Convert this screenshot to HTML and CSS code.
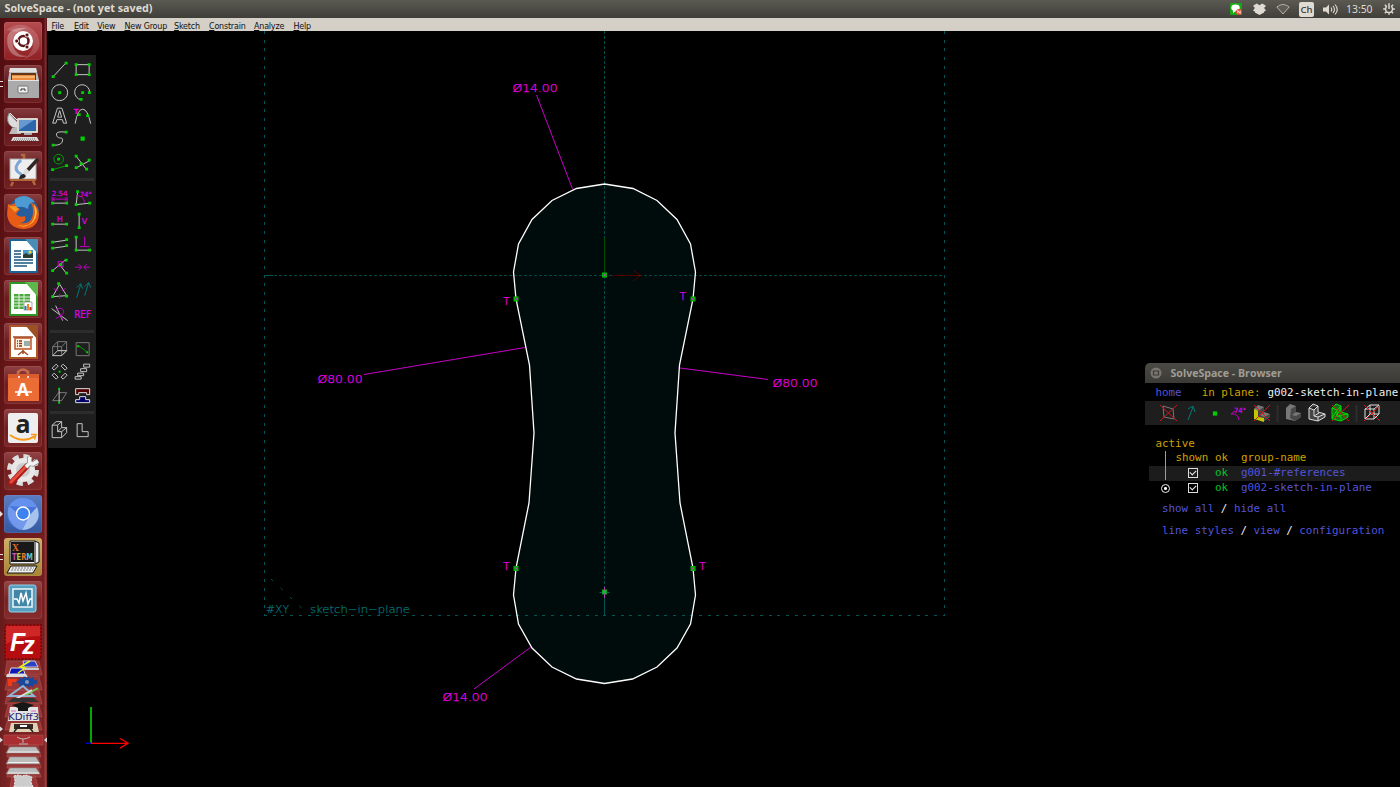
FILE: index.html
```html
<!DOCTYPE html>
<html lang="en">
<head>
<meta charset="utf-8">
<title>SolveSpace - (not yet saved)</title>
<link rel="stylesheet" href="styles.css">
</head>
<body>
<header class="topbar">
  <div class="title">SolveSpace - (not yet saved)</div>
  <div class="tray">
    <svg width="12" height="12" viewBox="0 0 12 12"><rect width="12" height="12" rx="1" fill="#16a816"/><ellipse cx="5.5" cy="4.8" rx="4.2" ry="3.2" fill="#fff"/><path d="M3 7v3l3-2z" fill="#fff"/><circle cx="9" cy="9" r="3" fill="#e8432e"/><path d="M7.8 10.5v-3l2.4 3v-3" stroke="#fff" stroke-width=".8" fill="none"/></svg>
    <svg width="13" height="12" viewBox="0 0 14 13"><path d="M4 .5 7 2.500l3-2L14 3l-2 2.500L14 8l-2 1.200v1L7 13l-5-2.800v-1L0 8l2-2.500L0 3z" fill="#dfdbd2"/></svg>
    <svg width="14" height="12" viewBox="0 0 14 12"><path d="M.8 4Q7-1 13.200 4L7 11z" fill="#5d5c55" stroke="#b5b1a8" stroke-width="1"/></svg>
    <span class="lang">Ch</span>
    <svg width="15" height="13" viewBox="0 0 15 13"><path d="M0 4.500h3L6 1.500v10l-3-3H0z" fill="#dfdbd2"/><path d="M8 4.500q1.500 2 0 4M10 3q3 3.500 0 7M12 1.500q4.500 5 0 10" fill="none" stroke="#dfdbd2" stroke-width="1.100"/></svg>
    <span class="clock">13:50</span>
    <svg width="12" height="12" viewBox="-6.500 -6.500 13 13"><path d="M-2.200-3A3.800 3.800 0 1 0 2.200-3M0-6.200V0M-6.300 0h2.500M6.300 0H3.800M0 6.300V3.800M-4.500 4.500l1.800-1.800M4.500 4.500 2.700 2.700M-4.500-4.500l1.800 1.800M4.500-4.500 2.700-2.700" fill="none" stroke="#dfdbd2" stroke-width="1.600"/></svg>
  </div>
</header>
<div class="desktop">
<nav class="launcher">
  <svg class="tile ubuntu" viewBox="0 0 38 38"><path d="M2 8Q20-4 33 12Q42 30 20 37Q34 26 27 13" fill="#fff" opacity=".16"/><path d="M4 25Q-1 4 23 6Q6 10 9 24Q12 34 24 34Q8 38 4 25" fill="#fff" opacity=".3"/><circle cx="19" cy="19" r="10" fill="#fff"/><circle cx="19.500" cy="19" r="5" fill="none" stroke="#5d1518" stroke-width="2.500"/><g fill="#5d1518" stroke="#fff" stroke-width=".8"><circle cx="12.700" cy="19" r="2"/><circle cx="23" cy="13" r="2"/><circle cx="23" cy="25" r="2"/></g></svg>
  <div class="tile run2"><svg viewBox="0 0 38 38"><path d="M6 3h26l3 12v18H4V15z" fill="#bbb"/><path d="M6 3h26l1 4H5z" fill="#e0e0e0"/><path d="M7 8h25v8H7z" fill="#643516"/><path d="M8 10h23v5H8z" fill="#ee8b3c"/><path d="M8 12h23" stroke="#ffe0ad" /><path d="M4 15h31v18H4z" fill="#aaa"/><path d="M4 15.500h31" stroke="#e5e5e5"/><rect x="14" y="21" width="10" height="7" rx="1" fill="#eee" stroke="#777"/><path d="M17 26v-2h4v2" fill="none" stroke="#333"/></svg></div>
  <svg class="tile" viewBox="0 0 38 38"><path d="M5 5Q1 14 8 19Q14 22 17 18z" fill="#ddd" stroke="#888"/><path d="M8 20h7l2 6H5z" fill="#bbb"/><path d="M6 5 13 12" stroke="#eee"/><rect x="13" y="10" width="21" height="15" rx="1" fill="#d8d8d0"/><path d="M15 12h17v11H15z" fill="#2e66ac"/><path d="M15 12h15L15 22z" fill="#6898d2"/><path d="M20 25h8v2h-8z" fill="#aaa"/><path d="M9 29h24l2 4H7z" fill="#d8d8d8"/><path d="M10 31h22M9 32.500h24" stroke="#777" stroke-dasharray="1 1"/></svg>
  <svg class="tile" viewBox="0 0 38 38"><path d="M17 4h3v5M9 31l-2 4M29 30l2 4" stroke="#b5693a" stroke-width="2.500" fill="none"/><rect x="6" y="8" width="26" height="20" fill="#eee" stroke="#aaa"/><path d="M17 9Q9 16 14 21Q20 24 16 28" fill="none" stroke="#7da6d8" stroke-width="3"/><path d="M34 8 22 21" stroke="#302722" stroke-width="3.500"/><path d="M24 19l-4 4" stroke="#ddd" stroke-width="4"/><path d="M15 28q1-5 5-5l2 2q-1 3-7 3" fill="#222"/><path d="M6 29h26" stroke="#b5693a" stroke-width="2"/></svg>
  <svg class="tile" viewBox="0 0 38 38"><circle cx="19.500" cy="18.500" r="15.500" fill="#285d9d"/><path d="M11 5Q22-2 31 8Q24 8 24 15Q18 11 11 14z" fill="#4c9bd2"/><path d="M4 10Q7 12 11 9Q11 13 16 15L12 20Q15 24 21 22Q23 28 16 29Q29 31 29 17Q29 10 25 8Q34 10 35 20Q34 35 19 35Q4 34 3 20z" fill="#e65b16"/><path d="M30 10Q36 19 29 28Q22 35 13 31Q30 35 31 18z" fill="#ffc83c"/><path d="M4 11Q7 13 11 12L15 15l-4 3z" fill="#f59a25"/></svg>
  <svg class="tile" viewBox="0 0 38 38"><path d="M5 2h21l8 9v25H5z" fill="#1b6394"/><path d="M7 4h17l8 10v20H7z" fill="#fff"/><path d="M21 2h13v15z" fill="#4a8eb8"/><path d="M10 14h7M10 17h7M10 20h7M10 23h19M10 26h19M10 29h13" stroke="#185785" stroke-width="1.500"/><path d="M19 13h10v8H19z" fill="#419bce"/><path d="M19 21v-3l3-2 3 2 4-2v5" fill="#2c3c31"/><circle cx="26" cy="15" r="1.500" fill="#ffd52f"/></svg>
  <svg class="tile" viewBox="0 0 38 38"><path d="M5 2h21l8 9v25H5z" fill="#2a9823"/><path d="M7 4h17l8 10v20H7z" fill="#fff"/><path d="M21 2h13v15z" fill="#5cb84c"/><path d="M10 14h16v15H10z" fill="#49a93c"/><path d="M10 17h16M10 20h16M10 23h16M10 26h16M15 14v15M20 14v15" stroke="#e8f5e5"/><path d="M20 22h8v8h-8z" fill="#fff" stroke="#888" stroke-width=".7"/><path d="M21.500 26v4" stroke="#2b79ae" stroke-width="2"/><path d="M24 24v6" stroke="#e98826" stroke-width="2"/><path d="M26.500 27v3" stroke="#c03325" stroke-width="2"/></svg>
  <svg class="tile" viewBox="0 0 38 38"><path d="M5 2h21l8 9v25H5z" fill="#ad5526"/><path d="M7 4h17l8 10v20H7z" fill="#fff"/><path d="M21 2h13v15z" fill="#9b5121"/><rect x="11" y="15" width="16" height="11" fill="#fff1df" stroke="#bd5528" stroke-width="1.500"/><path d="M9 14h20M19 27v4M14 32l5-4 5 4" fill="none" stroke="#a24a23" stroke-width="1.500"/><path d="M13 18h5M13 20.500h5M13 23h5" stroke="#8a3518" stroke-width="1.300" stroke-dasharray="1 1 3 1"/><path d="M20 18h6v5h-6z" fill="#99aeb0"/></svg>
  <svg class="tile" viewBox="0 0 38 38"><path d="M14 13V6q5-5 10 0v7" fill="none" stroke="#c86b49" stroke-width="2.500"/><path d="M4 8h31v27H4z" fill="#eb6d35"/><path d="M4 8h31v4H4z" fill="#d95c2c"/><circle cx="15" cy="11" r="1" fill="#fff"/><circle cx="24" cy="11" r="1" fill="#fff"/><text x="19" y="30" text-anchor="middle" fill="#fff" class="bag">A</text><path d="M11 26h17" stroke="#fff" stroke-width="1.500"/></svg>
  <svg class="tile" viewBox="0 0 38 38"><rect x="4" y="4" width="30" height="30" rx="2" fill="#eee"/><text x="19" y="24" text-anchor="middle" class="ama">a</text><path d="M6 26q13 9 25 1" fill="none" stroke="#f6991d" stroke-width="2"/><path d="M27 25.500h5l-1.500 5" fill="none" stroke="#f6991d" stroke-width="1.500"/></svg>
  <svg class="tile" viewBox="0 0 38 38"><circle cx="19" cy="18" r="13.500" fill="none" stroke="#ddd" stroke-width="5" stroke-dasharray="6 4.600"/><circle cx="19" cy="18" r="9.500" fill="#ccc" stroke="#e8e8e8" stroke-width="5"/><path d="M7 31 23 14" stroke="#a91a18" stroke-width="5.500" stroke-linecap="round"/><path d="M7 30 22 14.500" stroke="#e44b3d" stroke-width="3" stroke-linecap="round"/><path d="M22 15l5-5M26 5q-2 7 3 7l5-3" fill="none" stroke="#888" stroke-width="5"/><path d="M22 15l5-5M26 5q-2 7 3 7l5-3" fill="none" stroke="#f2f2f2" stroke-width="3.500"/></svg>
  <div class="tile run1 blue"><svg viewBox="0 0 38 38"><circle cx="19" cy="19" r="16" fill="#4776d8"/><path d="M5 11Q11 2 19 3Q29 3 33 12H19z" fill="#6591ee"/><path d="M33 12q5 12-5 20-4 3-10 3l7-14z" fill="#a8c2ee"/><path d="M5 11q-4 11 5 20 3 3 8 4l5-9z" fill="#7299ec"/><circle cx="19" cy="18.500" r="7.200" fill="#fff"/><circle cx="19" cy="18.500" r="5.800" fill="#3e82ef"/></svg></div>
  <div class="tile run2 gold"><svg viewBox="0 0 38 38"><path d="M6 3h25l4 2v19l-4 2H6z" fill="#eee" stroke="#111"/><path d="M7 4h23v20H7z" fill="#181818"/><path d="M31 3v22" stroke="#111"/><text x="8" y="13" class="xbig" textLength="7" lengthAdjust="spacingAndGlyphs">X</text><text x="8" y="22" class="xterm" textLength="21" lengthAdjust="spacingAndGlyphs"><tspan fill="#c54cc5">T</tspan><tspan fill="#aacb43">E</tspan><tspan fill="#e37a2b">R</tspan><tspan fill="#54c6d2">M</tspan></text><path d="M7 28h26l-4 7H3z" fill="#eee" stroke="#111"/><path d="M8 30h22M7 32h22" stroke="#777" stroke-dasharray="2 1"/></svg></div>
  <svg class="tile" viewBox="0 0 38 38"><rect x="5" y="4" width="27" height="27" rx="2" fill="#579fbf" stroke="#92d3e7"/><path d="M9 8h19v18H9z" fill="#4185a7" stroke="#eef8fc" stroke-width="1.500"/><path d="M10 18h3l2 4 2-10 2 8 3-8 2 11 2-5h2" fill="none" stroke="#fff" stroke-width="1.500"/></svg>
  <svg class="fz" viewBox="0 0 38 36"><rect x="1" y="1" width="36" height="34" fill="#b60d10" stroke="#7a090b" stroke-width="2" stroke-dasharray="2 1.500"/><path d="M2 2h34v10q-20 0-34 8z" fill="#dd3833" opacity=".6"/><text x="6" y="27" class="fzt">F<tspan dx="-3" dy="3">z</tspan></text></svg>
  <svg class="fold" width="47" height="127" viewBox="0 660 47 127">
    <g fill="#a33c3c" stroke="#bd6464" stroke-width=".6" opacity=".75"><path d="M7 661h32l3 14H5zM8 676h31l3 14H5zM8 690h31l3 14H5zM8 705h31l3 12H5zM8 718h31l3 12H5z"/><path d="M4 735h39v10H4z" fill="#b93236"/><path d="M9 745h29l3 12H7zM9 756h29l3 12H7zM9 767h29l3 10H7zM12 776h23l3 11H10z"/></g>
    <path d="M23 661h12l3 6H24z" fill="#2a40c9" stroke="#ccc"/><path d="M25 668h14v2H24z" fill="#ccc"/><path d="M11 668h12l2 6H9z" fill="#1018bb" stroke="#ddd"/><path d="M7 674h19l2 3H6z" fill="#ddd"/><path d="m30 661-10 6 5 1-7 5" fill="none" stroke="#edf520" stroke-width="1.500"/>
    <path d="M8 679h9v3h-5v4H8z" fill="#f03a17"/><ellipse cx="27" cy="682" rx="9" ry="4" fill="#19489c" stroke="#19489c" stroke-dasharray="2 2" stroke-width="3"/><circle cx="27" cy="682" r="2" fill="#8095bd"/>
    <path d="M9 696 23 686l11 10z" fill="none" stroke="#90b5d8" stroke-width="2"/><path d="m38 688-12 7" stroke="#68c84a" stroke-width="2"/><path d="m14 700 18-10" stroke="#ddd" stroke-width="2"/><path d="M13 698h21l5 4H8z" fill="#333"/>
    <path d="M10 707h28l1 14H8z" fill="#e4e4e4"/><path d="m12 705 11-3 11 3-6 3v3H18v-3z" fill="#171717"/><path d="M11 711h5m15 0h5" stroke="#d66bc1"/><text x="8" y="720" class="kd" textLength="31" lengthAdjust="spacingAndGlyphs">KDiff3</text>
    <path d="M11 723h26l2 9H9z" fill="#ddd2b5"/><path d="M14 724h19v5H14z" fill="#3b2722"/><path d="m14 732 4-5h11l4 5" fill="none" stroke="#222" stroke-width="1.500"/><path d="M20 726h7" stroke="#fff" stroke-width="2"/>
    <path d="M17 737q6 4 13 0M23 739v4m-4 1h9" fill="none" stroke="#bbb"/>
    <g fill="#bbb" stroke="#888" stroke-width=".5"><path d="M10 747h26l4 6H6zM10 757h26l4 7H6zM10 768h26l4 6H6z"/></g><path d="M8 752h31M8 762.500h31M8 773h31" stroke="#eee"/><path d="m14 776 4-1 4 1 4-1 6 2-1 5 2 5H14l1-6z" fill="#ccc" stroke="#eee" stroke-dasharray="2 1"/>
    <path d="m0 726.500 3 2.500-3 2.500zm0 11 3 2.500-3 2.500zM47 737.500l-3 2.500 3 2.500z" fill="#ddd"/>
  </svg>
</nav>
<main class="work">
  <div class="menu"><span><u>F</u>ile</span><span><u>E</u>dit</span><span><u>V</u>iew</span><span><u>N</u>ew Group</span><span><u>S</u>ketch</span><span><u>C</u>onstrain</span><span><u>A</u>nalyze</span><span><u>H</u>elp</span></div>
  <div class="canvas">
    <svg class="drawing" width="1353" height="756" viewBox="47 31 1353 756">
      <path fill="#000b0b" d="M604.500 184 633 188.500 657 200.500 677 219.500 690.500 244 695.500 272 693 299 679.500 365 675 433 680 503 693 568 695.500 595 690.500 624 677 648 657 667 632.500 679 604.500 683.500 576.500 679 552 667 532 648 518.500 624 513.500 595 516 568 529 503 534 433 529.500 365 516 299 513.500 272 518.500 244 532 219.500 552 200.500 576.500 188.500z"/>
      <g stroke="#005656" fill="none" shape-rendering="crispEdges">
        <path d="M264.500 31V615M944.500 31V615" stroke-dasharray="3 5.700"/><path d="M264 615.500H945" stroke-dasharray="3 5.700"/>
        <path d="M264 275.500H945" stroke="#004848" stroke-dasharray="3 2"/><path d="M604.500 31V615" stroke="#004c4c" stroke-dasharray="3 2"/><path d="M264 275.500h9M604.500 592v23"/>
      </g>
      <path d="M271 579 309 615" stroke="#005050" stroke-dasharray="3 10"/>
      <path fill="none" stroke="#fff" stroke-width="1.300" d="M604.500 184 633 188.500 657 200.500 677 219.500 690.500 244 695.500 272 693 299 679.500 365 675 433 680 503 693 568 695.500 595 690.500 624 677 648 657 667 632.500 679 604.500 683.500 576.500 679 552 667 532 648 518.500 624 513.500 595 516 568 529 503 534 433 529.500 365 516 299 513.500 272 518.500 244 532 219.500 552 200.500 576.500 188.500z"/>
      <path d="M604.500 238v34" stroke="#004c00"/><path d="M612 275.500h27M633 270l8 5.500-8 5.500" stroke="#540000" fill="none"/>
      <path d="M536.500 95 572.500 189M364 374.500 525 347.500M680 368 768 379.500M474 689 531 647" stroke="#c800c8"/>
      <g class="cad dim"><text x="512.500" y="92" textLength="45" lengthAdjust="spacingAndGlyphs">Ø14.00</text><text x="317.500" y="383" textLength="45" lengthAdjust="spacingAndGlyphs">Ø80.00</text><text x="772.500" y="386.500" textLength="45" lengthAdjust="spacingAndGlyphs">Ø80.00</text><text x="442.500" y="700.500" textLength="45" lengthAdjust="spacingAndGlyphs">Ø14.00</text><text x="503" y="305">T</text><text x="679.500" y="300">T</text><text x="503" y="570">T</text><text x="699" y="570">T</text></g>
      <g class="cad plane"><text x="266" y="613" textLength="23" lengthAdjust="spacingAndGlyphs">#XY</text><text x="310" y="613" textLength="100" lengthAdjust="spacingAndGlyphs">sketch−in−plane</text></g>
      <g class="nodes"><path d="M604.500 275h.01M516 299h.01M693 299h.01M516 568.500h.01M693 568.500h.01M604.500 592h.01"/><path class="core" d="M604.500 275h.01M516 299h.01M693 299h.01M516 568.500h.01M693 568.500h.01"/></g>
      <path d="M604.500 587v11" stroke="#b040b0"/><path d="M599.500 592.500h10" stroke="#106050"/><path d="M602.500 592h4" stroke="#20b040" stroke-width="3"/>
      <path d="M91 707v36" stroke="#00e000" stroke-width="1.500"/><path d="M86 743.300h5" stroke="#0000d0" stroke-width="1.500"/><path d="M91 743.300h36M120 738.500l8 4.800-8 4.800" fill="none" stroke="#f00" stroke-width="1.300"/>
    </svg>
    <aside class="tools">
      <div class="grp">
        <svg viewBox="-11.650 -11.650 23.300 23.300"><path class="g" d="M-6 6.500 6-6.500"/><path class="n" d="M-6.500 7h0M6.500-6.500h0"/></svg>
        <svg viewBox="-11.650 -11.650 23.300 23.300"><path class="g" d="M-6.500-5h13V5h-13z"/><path class="n" d="M-6.500-5h0M6.500-5h0M6.500 5h0M-6.500 5h0"/></svg>
        <svg viewBox="-11.650 -11.650 23.300 23.300"><circle class="g" r="8"/><path class="n" d="M0 0h0"/></svg>
        <svg viewBox="-11.650 -11.650 23.300 23.300"><path class="g" d="M7 0A7.500 7.500 0 1 0-1.500 7"/><path class="n" d="M0 0h0M6.700 0h0M-1.500 6.700h0"/></svg>
        <svg viewBox="-11.650 -11.650 23.300 23.300"><path class="g" d="M-7 7.500-2.200-7.500h4.400L7 7.500H3.800L2.800 4h-5.600l-1 3.500zM-2 1.500h4L0-5z"/></svg>
        <svg viewBox="-11.650 -11.650 23.300 23.300"><path class="g" d="M-7.500 8Q-5-6.500 0-6.500T8 8"/><path class="n" d="M-3.500-1h0M5 0h0"/><text class="mt strong" x="-9" y="-2" font-size="7">T</text></svg>
        <svg viewBox="-11.650 -11.650 23.300 23.300"><path class="g" d="M6.500-6.500Q-5-8-3-3C-1 1 3-2 3 1Q3 7-6 6.500"/><path class="n" d="M6.500-6.500h0M-6.500 6.500h0"/></svg>
        <svg viewBox="-11.650 -11.650 23.300 23.300"><path class="n big" d="M0 0h0"/></svg>
        <svg viewBox="-11.650 -11.650 23.300 23.300"><circle cx="-1" cy="-3.500" r="4.800" class="ng"/><path class="ng" d="M-7 7 7 3"/><path class="n" d="M-1-3.500h0M-7 7h0M7 3h0"/></svg>
        <svg viewBox="-11.650 -11.650 23.300 23.300"><path class="g" d="M-7-7 4 7M-6 5 7-2"/><path class="n" d="M-6.500-6.500h0M4 6.500h0M-6.500 5h0M6.500-2.500h0M-1.500 1h0"/></svg>
      </div><div class="sep"></div>
      <div class="grp">
        <svg viewBox="-11.650 -11.650 23.300 23.300"><text class="mt" x="-8" y="-2" font-size="7" textLength="16" lengthAdjust="spacingAndGlyphs">2.54</text><path class="m" d="M-7.500-1v6M7.500-1v6M-7 1.500H7M-5 0l-2 1.500 2 1.500M5 0l2 1.500L5 3"/><path class="g" d="M-6 5.500H6"/><path class="n" d="M-7 5.500h0M7 5.500h0"/></svg>
        <svg viewBox="-11.650 -11.650 23.300 23.300"><path class="g" d="M-5-6-6.500 7 7 5.500"/><path class="m" d="M-6-2Q1-2 2 5"/><text class="mt" x="-3" y="-1" font-size="7" textLength="12" lengthAdjust="spacingAndGlyphs">74°</text><path class="n" d="M-5-6h0M-6.500 7h0M7 5.500h0"/></svg>
        <svg viewBox="-11.650 -11.650 23.300 23.300"><text class="mt" x="-3" y="1" font-size="8">H</text><path class="g" d="M-6.500 3.500h13"/><path class="n" d="M-7 3.500h0M7 3.500h0"/></svg>
        <svg viewBox="-11.650 -11.650 23.300 23.300"><text class="mt" x="-1" y="3.500" font-size="8">V</text><path class="g" d="M-3.500-6V7"/><path class="n" d="M-3.500-6.500h0M-3.500 7h0"/></svg>
        <svg viewBox="-11.650 -11.650 23.300 23.300"><path class="g" d="M-6.500-1.500 7-3.500M-6.500 4.500 7 2.500"/><path class="n" d="M-7-1.500h0M7-4h0M-7 4.500h0M7 2h0"/></svg>
        <svg viewBox="-11.650 -11.650 23.300 23.300"><path class="g" d="M-6.500-6.500v13H7"/><path class="m" d="M2-7v10M-3 3H7"/><path class="n" d="M-6.500-6.500h0M-6.500 6.500h0M7 6.500h0"/></svg>
        <svg viewBox="-11.650 -11.650 23.300 23.300"><path class="g" d="M-7 4 6-7M0-2l7 9"/><rect class="m" x="-1.500" y="-5" width="5" height="5"/><path class="n" d="M-7 4h0M6.500-6.500h0M1-2h0M7 6.500h0"/></svg>
        <svg viewBox="-11.650 -11.650 23.300 23.300"><path class="m" d="M-7.500 .5h6M-4-2.500l3 3-3 3M7.500 .5h-6M4-2.500l-3 3 3 3"/></svg>
        <svg viewBox="-11.650 -11.650 23.300 23.300"><path class="g" d="M0-6.500-7 6 7 5z"/><path class="m" d="M-6-2l4 2M2 0l4-2M0 3v5"/><path class="n" d="M-1-7h0M-7 6h0M7 5.500h0"/></svg>
        <svg viewBox="-11.650 -11.650 23.300 23.300"><path class="t" d="M-6 7-2-6M2 5 6-8M-6-3l4-4 2 5M2-4l4-4 2 5"/></svg>
        <svg viewBox="-11.650 -11.650 23.300 23.300"><path class="g" d="M-8-5 8 7M-4-8 3 7"/><path class="m" d="M-4-3Q1-8 4-3 5 1-4 5M0 0l3 6"/></svg>
        <svg viewBox="-11.650 -11.650 23.300 23.300"><text class="mt" x="-8.500" y="4.200" font-size="10" textLength="17" lengthAdjust="spacingAndGlyphs">REF</text></svg>
      </div><div class="sep"></div>
      <div class="grp">
        <svg viewBox="-11.650 -11.650 23.300 23.300"><path class="d" d="M-7-2-2-7H7V2L2 7M-7-2H2L7-7M-7-2V7M2-2V7M-2-7V2H7"/><path class="g" d="M-7 7-2 2H7L2 7z"/></svg>
        <svg viewBox="-11.650 -11.650 23.300 23.300"><path class="d" d="M-6.500-6h13V7h-13z"/><path class="ng" d="M-4-3 4 3"/><path class="n tiny" d="M-4.500-2.500h0M4.500 3.500h0"/></svg>
        <svg viewBox="-11.650 -11.650 23.300 23.300"><path class="g" d="M-7.500-3.500-3.500-7.500l2 2-4 4zM7.500-3.500 3.500-7.500l-2 2 4 4zM-7.500 3.500l4 4 2-2-4-4zM7.500 3.500l-4 4-2-2 4-4z"/><path class="n tiny" d="M0 0h0"/></svg>
        <svg viewBox="-11.650 -11.650 23.300 23.300"><path class="g" d="M1-7.500h6v3H1zM-2-3h6v3h-6zM-5 1.500h6v2.500h-6zM-7.500 5h6v2.500h-6z"/></svg>
        <svg viewBox="-11.650 -11.650 23.300 23.300"><path class="d" d="M-7 5-1-3H7L2 5z"/><path class="g" d="M-.5-7V7"/><path class="n tiny" d="M-.5-7h0M-.5 7h0"/></svg>
        <svg viewBox="-11.650 -11.650 23.300 23.300"><path d="M-7-7H7v6H4v-2h-8v2h-3z" fill="#500" stroke="#ddd"/><path d="M-3 1h6v3h4v3H-7V4h4z" fill="#006" stroke="#ddd"/></svg>
      </div><div class="sep"></div>
      <div class="grp">
        <svg viewBox="-11.650 -11.650 23.300 23.300"><path class="g" d="M-7.500-4.500-3.500-8h5.500v6L7-2v5L2 8h-9.500zM-7.500-4.500H-2L2-8M-2-4.500V2l4-4M-2 2h4l5-4M2 2v6"/></svg>
        <svg viewBox="-11.650 -11.650 23.300 23.300"><path class="g" d="M-5.500-6h5v8h6v5h-11z"/></svg>
      </div>
    </aside>
    <section class="browser">
      <div class="bt"><svg width="12" height="12" viewBox="0 0 12 12"><circle cx="6" cy="6" r="5.500" fill="#77756e"/><path d="M3.500 4h5v4h-5z" fill="none" stroke="#3c3b37" stroke-width="1.200"/></svg><span>SolveSpace - Browser</span></div>
      <div class="path"><a>home</a><b>in plane:</b><i>g002-sketch-in-plane</i></div>
      <svg class="icons" width="255" height="24" viewBox="1145 401 255 24">
        <path d="M1277.500 405v17M1356.500 405v17" stroke="#2c2c2c" stroke-width="2"/>
        <path d="M1163 406l10 3 1 10-10-2z" fill="none" stroke="#777"/><path d="M1188 420l5-13M1188 409l5-3 2 6" class="t"/><path class="n big" d="M1215 413.500h0"/>
        <path class="m" d="M1231 414q7-1 8 6M1231 414l4-3"/><text class="mt" x="1234" y="413" font-size="7" textLength="12" lengthAdjust="spacingAndGlyphs">74°</text>
        <path d="M1254 409l4-4 6 2v5l6 2v3l-6 4-10-2z" fill="#777"/><path d="M1258 411l6-4v6l-4 2 4 2 6-3v3l-7 4-8-2z" fill="#444"/><path d="M1254 409l4 2v6l6 1v4l-10-3z" fill="#c4c400"/>
        <path d="M1286 408l4-4 6 2v6l5 1v4l-6 4-9-2z" fill="#777"/><path d="M1291 409l5-3v6l-4 3 4 1 5-3v4l-6 4-5-3z" fill="#484848"/>
        <path d="M1309 408l4-4 5 2v6l7 2v3l-7 4-9-2zM1309 408l5 2 4-4M1314 410v6l4 1v4M1314 416l5-3M1318 417l7-3" fill="#444" stroke="#ddd"/>
        <path d="M1332 408l4-4 5 2v6l7 2v3l-7 4-9-2z" fill="#176c17" stroke="#0d0"/><path d="M1332 408l5 2 4-4M1337 410v6l4 1v4M1332 418l5-8M1334 420l7-12M1337 416l11-2" fill="none" stroke="#0d0"/>
        <path d="M1365 409h9v10h-9zM1365 409l5-4h9v9l-5 5M1374 409l5-4M1370 405v9h9M1365 419l5-5" fill="none" stroke="#ddd"/>
        <path d="M1160 405l17 16M1177 405l-17 16M1254 405l16 16M1270 405l-16 16M1332 405l17 16M1349 405l-17 16M1364 405l16 16M1380 405l-16 16" stroke="#d01818"/>
      </svg>
      <div class="groups">
        <div class="act">active</div>
        <div class="row gold-t"><span></span><span>shown</span><span>ok</span><span>group-name</span></div>
        <div class="row alt"><span class="bar"></span><span class="check"></span><em>ok</em><a>g001-#references</a></div>
        <div class="row"><span class="radio"></span><span class="check"></span><em>ok</em><a>g002-sketch-in-plane</a></div>
        <div class="links"><a>show all</a> / <a>hide all</a></div>
        <div class="links"><a>line styles</a> / <a>view</a> / <a>configuration</a></div>
      </div>
    </section>
  </div>
</main>
</div>
</body>
</html>
```

FILE: styles.css
```css
* { box-sizing: border-box; }
body { margin: 0; width: 1400px; height: 787px; overflow: hidden; background: #000; display: flex; flex-direction: column; font-family: "Noto Sans", sans-serif; -webkit-font-smoothing: antialiased; }
svg { display: block; }
.topbar { height: 18px; flex: none; background: linear-gradient(#5b5a52, #3f3e39); display: flex; justify-content: space-between; align-items: center; padding: 0 5px 0 4.500px; color: #dfdbd2; }
.title { font: 700 10.750px/16px "Open Sans", sans-serif; white-space: nowrap; margin-top: -2px; }
.tray { display: grid; grid-template-columns: 23px 23px 23px 24px 23px 36.500px 13px; width: 165px; align-items: center; }
.lang { background: #dfdbd2; color: #45443f; width: 15px; height: 15px; border-radius: 2px; font: 600 9.500px/15px "Open Sans", sans-serif; text-align: center; }
.clock { font-size: 10.400px; line-height: 16px; margin-top: -1px; }
.desktop { flex: 1; display: flex; min-height: 0; }
.launcher { width: 47px; flex: none; padding: 4px 0 0 4px; display: flex; flex-direction: column; gap: 5px; background: linear-gradient(90deg, rgba(0,0,0,.12), transparent 20% 93%, rgba(255,255,255,.14) 97%, transparent), linear-gradient(#590e12, #6c1719 50%, #7f2424); }
.tile { width: 38px; height: 38px; flex: none; position: relative; border-radius: 3px; background: linear-gradient(rgba(255,200,200,.24), rgba(255,160,160,.05) 50%, rgba(255,170,170,.1)); box-shadow: inset 0 0 0 1px rgba(255,190,190,.1); }
.ubuntu { background: linear-gradient(#b54c50, #8f2023); }
.blue { background: linear-gradient(#5a7cc1, #36589f); }
.gold { background: linear-gradient(#cfae67, #a78435); }
.run1::before, .run2::before { content: ""; position: absolute; left: -4px; top: 16px; border: 3px solid transparent; border-left-color: #e6dcdc; border-right: 0; }
.run2::before { border: 0; width: 3px; height: 4px; border-top: 1px solid #e6dcdc; border-bottom: 1px solid #e6dcdc; }
.fz { width: 38px; height: 36px; flex: none; }
.fold { margin: -5px 0 0 -4px; flex: none; }
.bag { font: 700 17px "Noto Sans", sans-serif; }
.ama { font: 700 25px "Open Sans", sans-serif; fill: #222; }
.xbig { font: 700 10px "Liberation Serif", serif; fill: #e3692b; }
.xterm { font: 700 8px "DejaVu Sans", sans-serif; }
.fzt { font: italic 700 25px "Liberation Sans", sans-serif; fill: #fff; }
.kd { font: 8px "DejaVu Sans", sans-serif; fill: #27276e; }
.work { flex: 1; display: flex; flex-direction: column; min-width: 0; }
.menu { height: 13px; flex: none; background: #d4d0c8; color: #111; display: grid; grid-template-columns: 22.500px 23.200px 27.300px 49.500px 35px 45px 39.500px auto; padding: 1.500px 0 0 4.500px; font: 8px/13px "DejaVu Sans", sans-serif; letter-spacing: -.2px; white-space: nowrap; }
.menu u { text-underline-offset: 1px; text-decoration-thickness: 1px; }
.canvas { flex: 1; position: relative; background: #000; }
.cad { font: 200 11px "DejaVu Sans", sans-serif; stroke-width: .25px; }
.dim { fill: #f000f0; stroke: #f000f0; }
.plane { fill: #007272; stroke: #007272; }
.nodes path { fill: none; stroke: #00b400; stroke-width: 5; stroke-linecap: square; }
.nodes .core { stroke: #a040a0; stroke-width: 2; }
.tools { position: absolute; left: 1px; top: 24px; width: 48px; height: 393px; padding: 2.500px 0 0 .2px; background: #1e1e1e; }
.grp { display: grid; grid-template-columns: 23.300px 23.300px; grid-auto-rows: 23.300px; }
.sep { height: 3px; margin: 4.300px 2px; background: #2c2c2c; }
.g, .d, .m, .t, .ng { fill: none; stroke: #c4c4c4; stroke-width: 1; }
.d { stroke: #777; }
.m { stroke: #c000c0; }
.t { stroke: #007878; }
.ng { stroke: #00a000; }
.n { fill: none; stroke: #00d000; stroke-width: 2.900; stroke-linecap: square; }
.big { stroke-width: 4.200; }
.tiny { stroke-width: 2; }
.mt { fill: #e000e0; stroke: #e000e0; stroke-width: .2px; font-family: "DejaVu Sans", sans-serif; }
.strong { font-weight: 700; }
.browser { position: absolute; z-index: 0; left: 1098px; top: 332px; width: 255px; height: 190px; font: 10.870px/14.700px "DejaVu Sans Mono", monospace; background: #000; white-space: nowrap; }
.bt { height: 20px; border-radius: 5px 0 0; background: linear-gradient(#4b4a45, #3b3a36); display: flex; align-items: center; gap: 8.500px; padding-left: 5px; color: #a09d95; font: 700 10.600px "Open Sans", sans-serif; }
.path { height: 18px; line-height: 19px; padding-left: 10.500px; }
a { color: #5454d8; }
.path b { color: #d0a000; font-weight: 400; margin: 0 7px 0 20px; }
.path i { color: #eee; font-style: normal; }
.icons { background: #1e1e1e; }
.groups { padding-top: 11.600px; color: #eee; }
.act, .gold-t { color: #d0a000; }
.act { padding-left: 10.500px; }
.row { display: grid; grid-template-columns: 26.500px 39.500px 26px auto; height: 14.700px; padding-left: 4px; align-items: center; position: relative; }
.row > em { font-style: normal; color: #00c828; }
.alt::after { content: ""; position: absolute; inset: 0 0 0 4px; background: #1c1c1c; z-index: -1; }
.bar { width: 1px; height: 29px; background: #d0a000; margin: -15px 0 0 16px; }
.check { width: 10px; height: 10px; border: 1.500px solid #ddd; margin-left: 12px; position: relative; }
.check::after { content: ""; position: absolute; left: 1px; top: 1px; width: 5px; height: 3px; border: solid #eee; border-width: 0 0 1px 1px; transform: rotate(-45deg); }
.radio { width: 9px; height: 9px; border: 1.500px solid #eee; border-radius: 50%; margin-left: 12px; background: radial-gradient(#fff 1.200px, #000 1.800px); }
.links { padding: 7px 0 0 17px; }
```
